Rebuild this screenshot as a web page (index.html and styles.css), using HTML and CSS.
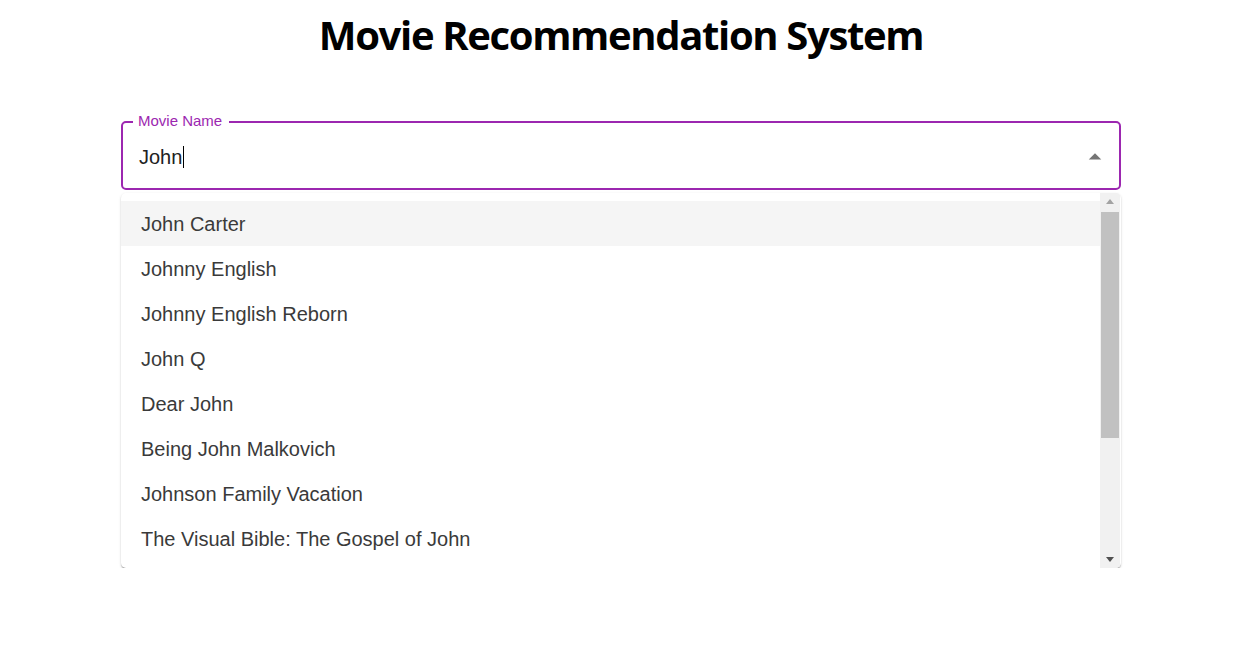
FILE: index.html
```html
<!DOCTYPE html>
<html>
<head>
<meta charset="utf-8">
<link rel="stylesheet" href="styles.css">
</head>
<body>
<div class="page">
  <h1 class="title">Movie Recommendation System</h1>
  <div class="field">
    <fieldset class="outline"><legend class="legend"><span>Movie Name</span></legend></fieldset>
    <label class="label">Movie Name</label>
    <div class="input-row">
      <div class="value">John<span class="caret"></span></div>
      <svg class="popup-icon" viewBox="0 0 24 24" width="30" height="30"><path d="M7 14l5-5 5 5z" fill="#757575"/></svg>
    </div>
  </div>
  <div class="paper">
    <ul class="listbox">
      <li class="option focused">John Carter</li>
      <li class="option">Johnny English</li>
      <li class="option">Johnny English Reborn</li>
      <li class="option">John Q</li>
      <li class="option">Dear John</li>
      <li class="option">Being John Malkovich</li>
      <li class="option">Johnson Family Vacation</li>
      <li class="option">The Visual Bible: The Gospel of John</li>
    </ul>
    <div class="scrollbar">
      <div class="sb-btn"><svg width="8" height="5" viewBox="0 0 8 5"><path d="M0 5L4 0L8 5z" fill="#a3a3a3"/></svg></div>
      <div class="sb-track"><div class="sb-thumb"></div></div>
      <div class="sb-btn"><svg width="8" height="5" viewBox="0 0 8 5"><path d="M0 0L8 0L4 5z" fill="#505050"/></svg></div>
    </div>
  </div>
</div>
</body>
</html>
```
FILE: styles.css
```css
html, body {
  margin: 0;
  padding: 0;
  background: #fff;
}
body {
  font-family: "Liberation Sans", Arial, sans-serif;
}
.page {
  width: 1000px;
  margin-left: 121px;
  padding-top: 8px;
}
.title {
  margin: 0;
  text-align: center;
  font-family: "Open Sans", "Noto Sans", sans-serif;
  font-weight: 700;
  font-size: 40px;
  line-height: 54px;
  color: #000;
  letter-spacing: -1.35px;
}
.field {
  position: relative;
  margin-top: 60px;
  height: 68px;
}
.outline {
  position: absolute;
  top: -8px;
  left: 0;
  right: 0;
  bottom: 0;
  margin: 0;
  padding: 0 10px;
  border: 2px solid #9c27b0;
  border-radius: 5px;
  pointer-events: none;
}
.legend {
  padding: 0;
  font-size: 15px;
  line-height: 15px;
  height: 15px;
  visibility: hidden;
}
.legend span {
  padding: 0 6px;
  display: inline-block;
}
.label {
  position: absolute;
  top: -11px;
  left: 17px;
  font-size: 15px;
  line-height: 20px;
  color: #9c27b0;
}
.input-row {
  display: flex;
  align-items: center;
  height: 68px;
  padding: 2px 11px 0 18px;
  box-sizing: border-box;
}
.value {
  flex: 1;
  font-size: 20px;
  color: #212121;
  display: flex;
  align-items: center;
}
.caret {
  display: inline-block;
  width: 1px;
  height: 22px;
  background: #000;
  margin-left: 1px;
}
.popup-icon {
  display: block;
}
.paper {
  margin-top: 3px;
  height: 375px;
  background: #fff;
  border-radius: 5px;
  box-shadow: 0 2px 2px -1px rgba(0,0,0,0.25), 0 1px 1px 0 rgba(0,0,0,0.14), 0 1px 3px 0 rgba(0,0,0,0.12);
  display: flex;
  overflow: hidden;
}
.listbox {
  flex: 1;
  margin: 0;
  padding: 8px 0 0;
  list-style: none;
  overflow: hidden;
}
.option {
  height: 45px;
  padding: 1px 20px 0;
  box-sizing: border-box;
  display: flex;
  align-items: center;
  font-size: 20px;
  color: #3a3a3a;
}
.option.focused {
  background: #f5f5f5;
}
.scrollbar {
  width: 20px;
  margin-right: 1px;
  background: #f1f1f1;
  display: flex;
  flex-direction: column;
}
.sb-btn {
  height: 17px;
  display: flex;
  align-items: center;
  justify-content: center;
}
.sb-track {
  flex: 1;
  padding: 2px 1px 0;
}
.sb-thumb {
  height: 226px;
  background: #c1c1c1;
}
```
